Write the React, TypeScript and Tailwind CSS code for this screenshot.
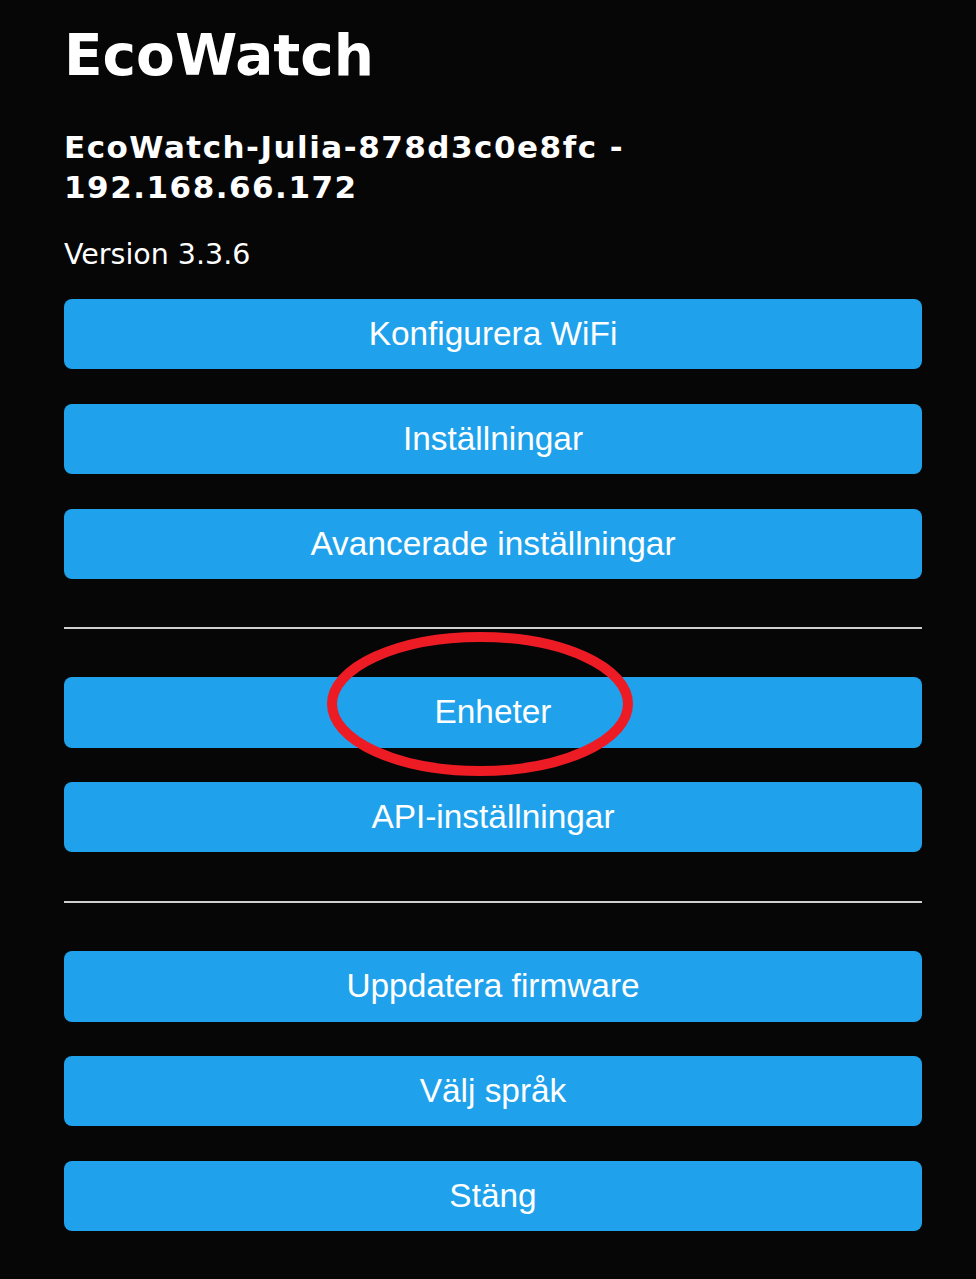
import React from "react";

const Btn = ({ label, className = "", children }: { label: string; className?: string; children?: React.ReactNode }) => (
  <div
    className={`relative flex h-[70.4px] w-full items-center justify-center rounded-[8px] bg-[#1fa2eb] text-[33.4px] text-white ${className}`}
    style={{ fontFamily: '"Liberation Sans", Arial, sans-serif' }}
  >
    <span>{label}</span>
    {children}
  </div>
);

export default function App() {
  return (
    <div className="min-h-screen w-full bg-[#060606]">
      <div
        className="ml-[64px] flex w-[858px] flex-col pt-[22.6px] text-white"
        style={{ fontFamily: '"DejaVu Sans", Verdana, sans-serif' }}
      >
        <h1 className="text-[56.5px] font-bold leading-[66px]">EcoWatch</h1>
        <div className="mt-[38.4px] text-[31px] font-bold leading-[40px] tracking-[1.5px]">
          EcoWatch-Julia-878d3c0e8fc -<br />
          192.168.66.172
        </div>
        <div className="mt-[28.3px] text-[28.5px] leading-[40px]">Version 3.3.6</div>

        <Btn label="Konfigurera WiFi" className="mt-[23.7px]" />
        <Btn label="Inställningar" className="mt-[34.4px]" />
        <Btn label="Avancerade inställningar" className="mt-[34.4px]" />

        <div className="mt-[48.3px] h-[2px] w-full bg-[#cfcfcf]" />

        <Btn label="Enheter" className="mt-[48px]">
          <svg
            className="pointer-events-none absolute left-[263px] top-[-45px] overflow-visible"
            width="306"
            height="144"
            viewBox="0 0 306 144"
          >
            <ellipse cx="153" cy="72" rx="148" ry="67" fill="none" stroke="#ed1c24" strokeWidth="10" />
          </svg>
        </Btn>
        <Btn label="API-inställningar" className="mt-[34.4px]" />

        <div className="mt-[48.9px] h-[2px] w-full bg-[#cfcfcf]" />

        <Btn label="Uppdatera firmware" className="mt-[48px]" />
        <Btn label="Välj språk" className="mt-[34.4px]" />
        <Btn label="Stäng" className="mt-[34.4px]" />
      </div>
    </div>
  );
}
